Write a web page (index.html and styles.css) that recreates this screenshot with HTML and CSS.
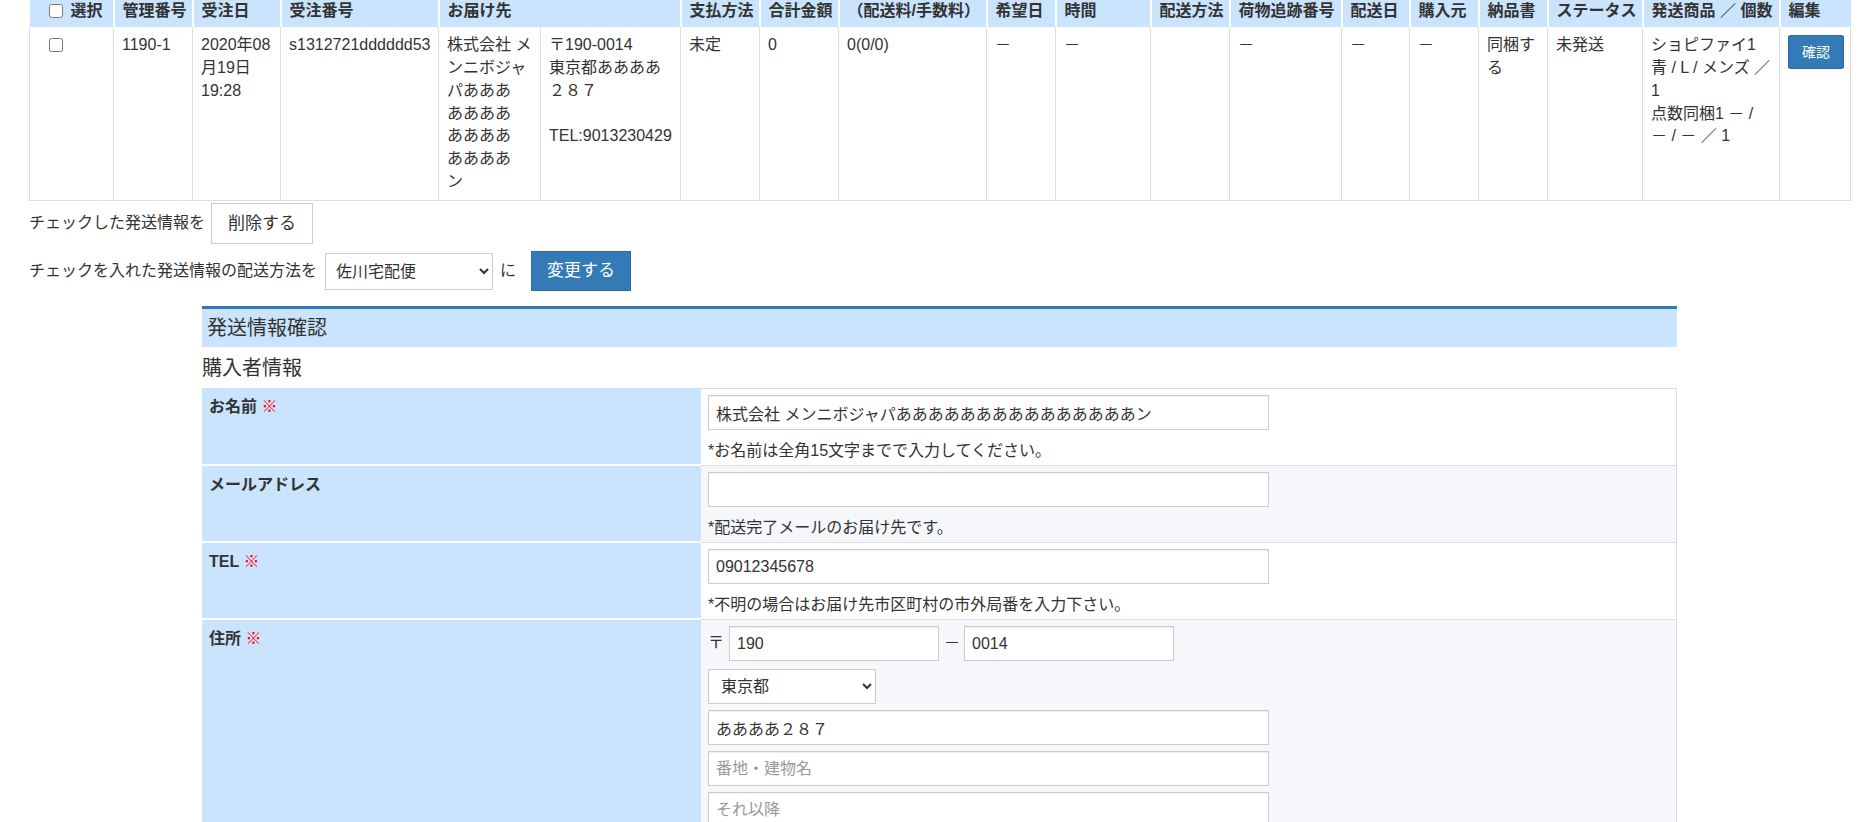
FILE: index.html
```html
<!DOCTYPE html>
<html lang="ja">
<head>
<meta charset="utf-8">
<title>発送情報確認</title>
<link rel="stylesheet" href="styles.css">
</head>
<body>
<div class="page">
  <table class="orders">
    <colgroup>
      <col class="w84"><col class="w79"><col class="w88"><col class="w158"><col class="w102"><col class="w140">
      <col class="w79"><col class="w79"><col class="w148"><col class="w69"><col class="w95"><col class="w79">
      <col class="w112"><col class="w68"><col class="w69"><col class="w69"><col class="w95"><col class="w137"><col class="w71">
    </colgroup>
    <thead>
      <tr>
        <th><input type="checkbox" class="chk">選択</th>
        <th>管理番号</th>
        <th>受注日</th>
        <th>受注番号</th>
        <th colspan="2">お届け先</th>
        <th>支払方法</th>
        <th>合計金額</th>
        <th>（配送料/手数料）</th>
        <th>希望日</th>
        <th>時間</th>
        <th>配送方法</th>
        <th>荷物追跡番号</th>
        <th>配送日</th>
        <th>購入元</th>
        <th>納品書</th>
        <th>ステータス</th>
        <th>発送商品 ／ 個数</th>
        <th>編集</th>
      </tr>
    </thead>
    <tbody>
      <tr>
        <td><input type="checkbox" class="chk"></td>
        <td>1190-1</td>
        <td>2020年08月19日 19:28</td>
        <td class="nowrap">s1312721dddddd53</td>
        <td>株式会社 メ<br>ンニボジャ<br>パあああ<br>ああああ<br>ああああ<br>ああああ<br>ン</td>
        <td>〒190-0014<br>東京都ああああ<br>２８７<br><br>TEL:9013230429</td>
        <td>未定</td>
        <td>0</td>
        <td>0(0/0)</td>
        <td>－</td>
        <td>－</td>
        <td></td>
        <td>－</td>
        <td>－</td>
        <td>－</td>
        <td>同梱する</td>
        <td>未発送</td>
        <td>ショピファイ1 青 / L / メンズ ／ 1<br>点数同梱1 － / － / － ／ 1</td>
        <td><button class="btn-confirm">確認</button></td>
      </tr>
    </tbody>
  </table>

  <div class="act act-first">
    <span>チェックした発送情報を</span>
    <button class="btn-plain">削除する</button>
  </div>
  <div class="act act-second">
    <span>チェックを入れた発送情報の配送方法を</span>
    <select class="sel-ship"><option>佐川宅配便</option></select>
    <span class="ni">に</span>
    <button class="btn-blue">変更する</button>
  </div>

  <section class="confirm">
    <h2 class="confirm-title">発送情報確認</h2>
    <h3 class="confirm-sub">購入者情報</h3>
    <table class="form-table">
      <tr>
        <th>お名前 <span class="req">※</span></th>
        <td>
          <input class="fc" type="text" value="株式会社 メンニボジャパあああああああああああああああン">
          <p class="help">*お名前は全角15文字までで入力してください。</p>
        </td>
      </tr>
      <tr class="alt">
        <th>メールアドレス</th>
        <td>
          <input class="fc" type="text" value="">
          <p class="help">*配送完了メールのお届け先です。</p>
        </td>
      </tr>
      <tr>
        <th>TEL <span class="req">※</span></th>
        <td>
          <input class="fc" type="text" value="09012345678">
          <p class="help">*不明の場合はお届け先市区町村の市外局番を入力下さい。</p>
        </td>
      </tr>
      <tr class="alt">
        <th>住所 <span class="req">※</span></th>
        <td>
          <div class="zip">
            <span class="zip-mark">〒</span>
            <input class="fc fc-zip" type="text" value="190">
            <span class="zip-dash">－</span>
            <input class="fc fc-zip" type="text" value="0014">
          </div>
          <select class="sel-pref"><option>東京都</option></select>
          <input class="fc addr" type="text" value="ああああ２８７">
          <input class="fc addr" type="text" placeholder="番地・建物名">
          <input class="fc addr" type="text" placeholder="それ以降">
        </td>
      </tr>
    </table>
  </section>
</div>
</body>
</html>
```

FILE: styles.css
```css
html { overflow: hidden; }
body {
  margin: 0;
  font-family: "Liberation Sans", "Noto Sans CJK JP", sans-serif;
  font-size: 16px;
  line-height: 22.86px;
  color: #333;
  background: #fff;
}
.page { padding: 0 18px 0 29px; }

/* orders table */
.orders {
  width: 1821px;
  border-collapse: collapse;
  table-layout: fixed;
}
.w84 { width: 84px; } .w79 { width: 79px; } .w88 { width: 88px; } .w158 { width: 158px; }
.w102 { width: 102px; } .w140 { width: 140px; } .w148 { width: 148px; } .w69 { width: 69px; }
.w95 { width: 95px; } .w112 { width: 112px; } .w68 { width: 68px; } .w137 { width: 137px; } .w71 { width: 71px; }

.orders th {
  background: #cae4fd;
  font-weight: bold;
  text-align: left;
  padding: 0 8px 6px;
  line-height: 21px;
  white-space: nowrap;
  overflow: visible;
}
.orders th + th { border-left: 2px solid #fff; }
.orders td {
  border: 1px solid #ddd;
  border-top: 0;
  padding: 7px 8px 6px;
  vertical-align: top;
}
.orders td.nowrap { white-space: nowrap; }
.chk {
  width: 14px;
  height: 14px;
  margin: 0 8px 0 11px;
  vertical-align: -2px;
}
.btn-confirm {
  display: block;
  margin-top: 1px;
  white-space: nowrap;
  font-family: inherit;
  font-size: 14px;
  line-height: 20px;
  padding: 6px 13px;
  color: #fff;
  background: #337ab7;
  border: 1px solid #2e6da4;
  border-radius: 2px;
}

/* action rows */
.act { display: flex; align-items: center; }
.act-first { margin-top: 2px; }
.act-second { margin-top: 7px; }
.act-first .btn-plain { margin-left: 6px; }
.btn-plain {
  font-family: inherit;
  font-size: 17px;
  line-height: 23px;
  padding: 8px 16px;
  color: #333;
  background: #fff;
  border: 1px solid #ccc;
  border-radius: 0;
}
.sel-ship {
  margin-left: 8px;
  width: 168px;
  height: 37px;
  font-family: inherit;
  font-size: 16px;
  color: #333;
  background: #fff;
  border: 1px solid #ccc;
  border-radius: 0;
  padding: 0 6px;
}
.ni { margin-left: 7px; }
.btn-blue {
  margin-left: 15px;
  font-family: inherit;
  font-size: 17px;
  line-height: 22px;
  padding: 8px 15px;
  color: #fff;
  background: #337ab7;
  border: 1px solid #2e6da4;
  border-radius: 0;
}

/* confirm section */
.confirm {
  width: 1475px;
  margin: 15px auto 0;
}
.confirm-title {
  margin: 0;
  border-top: 3px solid #337ab7;
  background: #cae4fd;
  font-size: 20px;
  font-weight: normal;
  line-height: 38px;
  padding: 0 5px;
}
.confirm-sub {
  margin: 0;
  padding-top: 2px;
  font-size: 20px;
  font-weight: normal;
  line-height: 39px;
}
.form-table {
  width: 1475px;
  border-collapse: separate;
  border-spacing: 0;
}
.form-table th {
  width: 499px;
  box-sizing: border-box;
  background: #cae4fd;
  text-align: left;
  vertical-align: top;
  padding: 8px 7px;
  border-bottom: 2px solid #fff;
  font-weight: bold;
}
.form-table td {
  vertical-align: top;
  padding: 6px 7px 3px;
  border-bottom: 1px solid #ddd;
  border-right: 1px solid #ddd;
  background: #fff;
}
.form-table tr:first-child td { border-top: 1px solid #ddd; }
.form-table tr.alt td { background: #f5f7fa; }
.req { color: #f00; font-weight: normal; }

.fc {
  display: block;
  box-sizing: border-box;
  width: 561px;
  height: 35px;
  margin: 0;
  padding: 0 7px;
  font-family: inherit;
  font-size: 16px;
  color: #333;
  background: #fff;
  border: 1px solid #ccc;
  border-radius: 0;
  box-shadow: inset 0 1px 1px rgba(0,0,0,.075);
}
.fc::placeholder { color: #999; }
.help { margin: 9px 0 0; line-height: 23px; }

.zip { display: flex; align-items: center; gap: 5px; }
.zip-mark { width: 16px; }
.zip-dash { width: 15px; text-align: center; }
.fc-zip { width: 210px; }
.sel-pref {
  display: block;
  margin-top: 8px;
  width: 168px;
  height: 35px;
  font-family: inherit;
  font-size: 16px;
  color: #333;
  background: #fff;
  border: 1px solid #ccc;
  border-radius: 0;
  padding: 0 8px;
}
.addr { margin-top: 6px; }
```
